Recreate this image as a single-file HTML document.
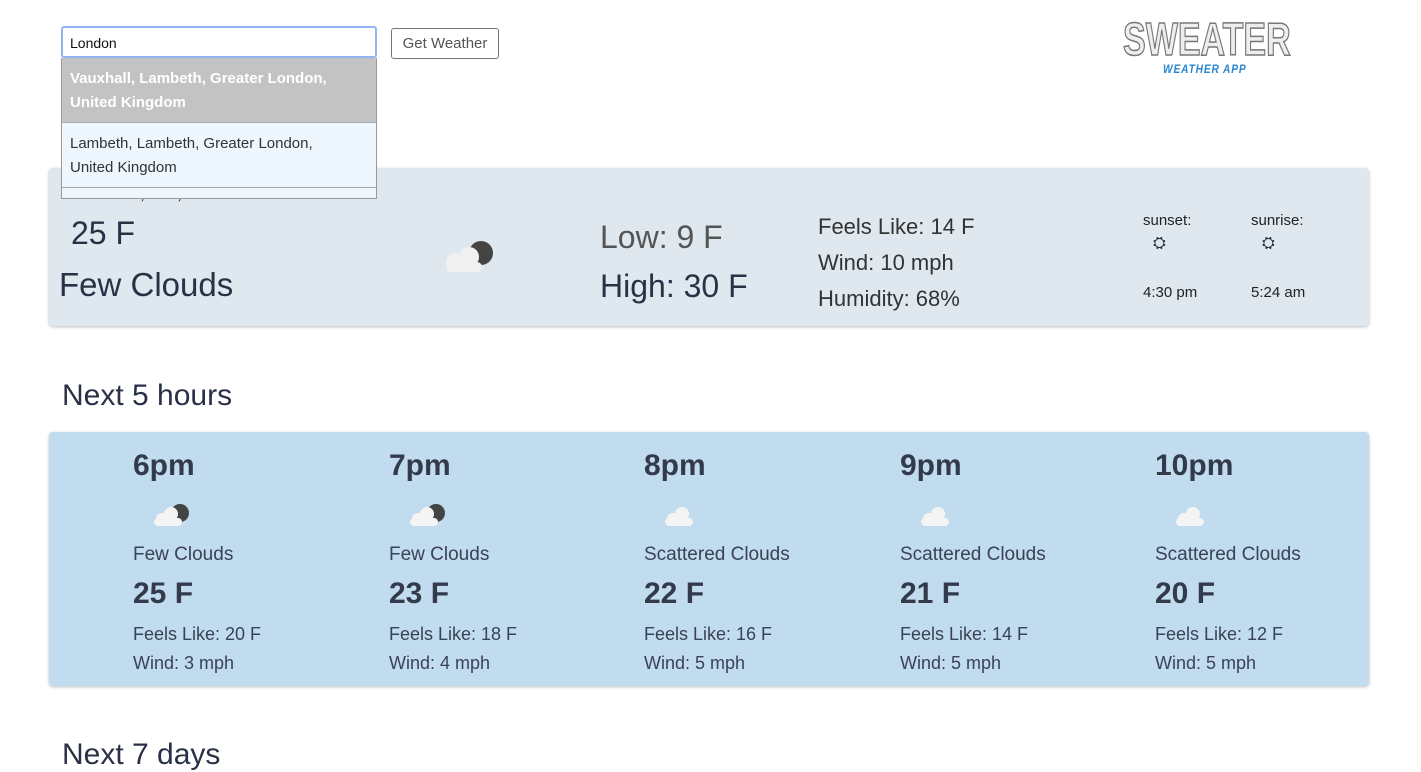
<!DOCTYPE html>
<html><head><meta charset="utf-8"><style>
body{margin:0;background:#fff;font-family:"Liberation Sans",sans-serif;color:#2a3146;width:1421px;height:750px;overflow:hidden;position:relative}
.a{position:absolute;white-space:nowrap}
.card{position:absolute;left:49px;width:1320px;border-radius:4px;box-shadow:0 1px 3px rgba(0,0,0,.25)}
</style></head><body>
<div class="a" style="left:61px;top:26px;width:312px;height:28px;border:2px solid #8fb4f0;border-radius:3px;"></div>
<div class="a" style="left:70px;top:35px;font-size:14px;color:#111">London</div>
<div class="a" style="left:391px;top:28px;width:106px;height:29px;border:1px solid #777;border-radius:3px;font-size:15px;color:#555;text-align:center;line-height:29px">Get Weather</div>
<div class="a" style="left:1123px;top:12px;font-size:46px;font-weight:bold;letter-spacing:0px;color:#eee;-webkit-text-stroke:1.5px #777;transform:scaleX(0.74);transform-origin:0 0">SWEATER</div>
<div class="a" style="left:1163px;top:62px;font-size:12px;font-style:italic;color:#2a86d0;letter-spacing:1px;font-weight:bold;transform:scaleX(0.85);transform-origin:0 0">WEATHER APP</div>

<div class="card" style="top:168px;height:158px;background:#dfe8ef"></div>
<div class="a" style="left:60px;top:186px;font-size:18px;color:#333;height:18px;overflow:hidden;line-height:14px">Rosindale, MA, US</div>
<div class="a" style="left:71px;top:215px;font-size:32px">25 F</div>
<div class="a" style="left:59px;top:266px;font-size:33px">Few Clouds</div>
<svg class="a" style="left:440px;top:238px" width="56" height="36"><circle cx="41" cy="15" r="12" fill="#444"/><g fill="#f0f0f0"><circle cx="15" cy="24" r="9"/><circle cx="29" cy="19" r="10"/><rect x="6" y="24" width="36" height="10" rx="5"/></g></svg>
<div class="a" style="left:600px;top:219px;font-size:32px;color:#555;font-weight:300">Low: 9 F</div>
<div class="a" style="left:600px;top:268px;font-size:32px">High: 30 F</div>
<div class="a" style="left:818px;top:209px;font-size:22px;line-height:36px;color:#333">Feels Like: 14 F<br>Wind: 10 mph<br>Humidity: 68%</div>
<div class="a" style="left:1143px;top:212px;font-size:15px;color:#222">sunset:</div>
<div class="a" style="left:1251px;top:212px;font-size:15px;color:#222">sunrise:</div>
<div class="a" style="left:1153px;top:235px;font-size:16px">⛭</div>
<div class="a" style="left:1262px;top:235px;font-size:16px">⛭</div>
<div class="a" style="left:1143px;top:284px;font-size:15px;color:#222">4:30 pm</div>
<div class="a" style="left:1251px;top:284px;font-size:15px;color:#222">5:24 am</div>

<div class="a" style="left:61px;top:58px;width:314px;height:140px;border:1px solid #999;border-top:none;background:#eef6fe"></div>
<div class="a" style="left:62px;top:58px;width:314px;height:64px;background:#c3c3c3"></div>
<div class="a" style="left:70px;top:67px;font-size:15px;line-height:24px;color:#fff;font-weight:bold">Vauxhall, Lambeth, Greater London,<br>United Kingdom</div>
<div class="a" style="left:62px;top:122px;width:314px;height:1px;background:#aaa"></div>
<div class="a" style="left:70px;top:132px;font-size:15px;line-height:24px;color:#333">Lambeth, Lambeth, Greater London,<br>United Kingdom</div>
<div class="a" style="left:62px;top:187px;width:314px;height:1px;background:#aaa"></div>

<div class="a" style="left:62px;top:379px;font-size:30px">Next 5 hours</div>
<div class="card" style="top:432px;height:254px;background:#c1dcee"></div>

<div id="cols"></div>
<div class="a" style="left:62px;top:738px;font-size:30px">Next 7 days</div>
<script>
var d=[["6pm","Few Clouds","25 F","20 F","3 mph",1],["7pm","Few Clouds","23 F","18 F","4 mph",1],["8pm","Scattered Clouds","22 F","16 F","5 mph",0],["9pm","Scattered Clouds","21 F","14 F","5 mph",0],["10pm","Scattered Clouds","20 F","12 F","5 mph",0]];
var h="";d.forEach(function(r,i){var x=Math.round(133+i*255.6);
h+='<div class="a" style="left:'+x+'px;top:449px;font-size:30px;font-weight:bold;color:#333a4c">'+r[0]+'</div>';
h+='<svg class="a" style="left:'+(x+18)+'px;top:500px" width="40" height="28">'+(r[5]?'<circle cx="29" cy="13" r="9" fill="#444"/>':'')+'<g fill="#f4f4f4"><circle cx="11" cy="19" r="6"/><circle cx="20" cy="14" r="7"/><rect x="3" y="18" width="28" height="8" rx="4"/></g></svg>';
h+='<div class="a" style="left:'+x+'px;top:544px;font-size:19px;color:#3a4256">'+r[1]+'</div>';
h+='<div class="a" style="left:'+x+'px;top:577px;font-size:30px;font-weight:900;color:#333a4c">'+r[2]+'</div>';
h+='<div class="a" style="left:'+x+'px;top:620px;font-size:18px;line-height:29px;color:#3a4256">Feels Like: '+r[3]+'<br>Wind: '+r[4]+'</div>';});
document.getElementById("cols").innerHTML=h;
</script>
</body></html>
